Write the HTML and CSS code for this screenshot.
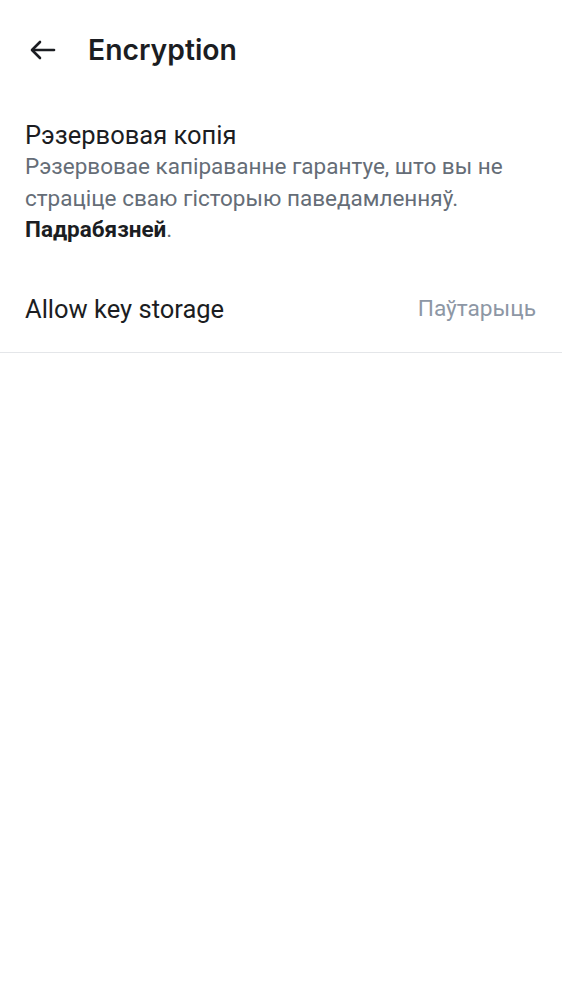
FILE: index.html
```html
<!DOCTYPE html>
<html lang="be">
<head>
<meta charset="utf-8">
<link rel="stylesheet" href="styles.css">
</head>
<body>
<header class="topbar">
  <button class="back" aria-label="Back">
    <svg width="28" height="20" viewBox="0 0 28 20" fill="none" stroke="#1b1d22" stroke-width="2.6" stroke-linecap="round" stroke-linejoin="round">
      <path d="M25 10H4"/>
      <path d="M11 2L3 10l8 8"/>
    </svg>
  </button>
  <h1 class="title">Encryption</h1>
</header>
<section class="backup">
  <h2 class="section-title">Рэзервовая копія</h2>
  <p class="section-desc">Рэзервовае капіраванне гарантуе, што вы не страціце сваю гісторыю паведамленняў. <b class="more">Падрабязней</b>.</p>
</section>
<div class="row">
  <span class="row-label">Allow key storage</span>
  <span class="row-action">Паўтарыць</span>
</div>
</body>
</html>
```
FILE: styles.css
```css
html, body {
  margin: 0;
  padding: 0;
  background: #ffffff;
  font-family: Roboto, "Noto Sans", sans-serif;
  color: #1b1d22;
}
.topbar {
  display: flex;
  align-items: center;
  height: 100px;
  padding-left: 29px;
  box-sizing: border-box;
}
.back {
  border: 0;
  background: none;
  padding: 0;
  width: 28px;
  height: 20px;
  display: flex;
}
.title {
  margin: 0 0 0 31px;
  font-family: Inter, Roboto, sans-serif;
  font-size: 28.3px;
  font-weight: 600;
  color: #1b1d22;
}
.backup {
  padding: 19px 25px 0 25px;
}
.section-title {
  margin: 0;
  font-size: 25.5px;
  font-weight: 400;
  line-height: 32px;
  color: #1b1d22;
}
.section-desc {
  margin: 0;
  font-size: 22.5px;
  line-height: 31.5px;
  color: #656d77;
}
.more {
  font-weight: 700;
  color: #1b1d22;
}
.row {
  display: flex;
  justify-content: space-between;
  align-items: center;
  height: 107px;
  padding: 20px 26px 0 25px;
  box-sizing: border-box;
  border-bottom: 1px solid #e4e6e9;
}
.row-label {
  font-size: 25.5px;
  color: #1b1d22;
}
.row-action {
  font-size: 22.7px;
  color: #8d97a5;
}
```
